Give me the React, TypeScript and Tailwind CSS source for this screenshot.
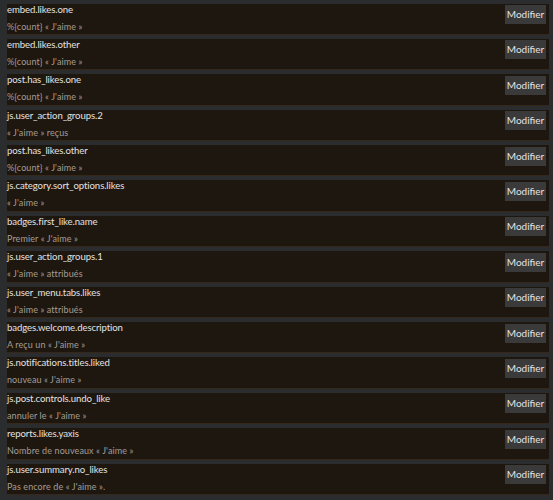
import React from "react";

const rows = [
  { key: "embed.likes.one", value: "%{count} « J'aime »" },
  { key: "embed.likes.other", value: "%{count} « J'aime »" },
  { key: "post.has_likes.one", value: "%{count} « J'aime »" },
  { key: "js.user_action_groups.2", value: "« J'aime » reçus" },
  { key: "post.has_likes.other", value: "%{count} « J'aime »" },
  { key: "js.category.sort_options.likes", value: "« J'aime »" },
  { key: "badges.first_like.name", value: "Premier « J'aime »" },
  { key: "js.user_action_groups.1", value: "« J'aime » attribués" },
  { key: "js.user_menu.tabs.likes", value: "« J'aime » attribués" },
  { key: "badges.welcome.description", value: "A reçu un « J'aime »" },
  { key: "js.notifications.titles.liked", value: "nouveau « J'aime »" },
  { key: "js.post.controls.undo_like", value: "annuler le « J'aime »" },
  { key: "reports.likes.yaxis", value: "Nombre de nouveaux « J'aime »" },
  { key: "js.user.summary.no_likes", value: "Pas encore de « J'aime »." },
];

const App = () => {
  return (
    <div
      className="w-full h-[500px] overflow-hidden bg-[#2b2c2d] pl-[7px] pr-[4px] pt-[3.5px] flex flex-col gap-[4px]"
      style={{ fontFamily: "Lato, 'Open Sans', sans-serif" }}
    >
      {rows.map((row) => (
        <div
          key={row.key}
          className="h-[31.4px] shrink-0 bg-[#1e170f] border-b border-[#35281b] flex justify-between items-start"
        >
          <div className="flex flex-col">
            <span className="text-[9.6px] leading-[12px] text-[#e4e2e0] tracking-[-0.1px]">
              {row.key}
            </span>
            <span className="text-[9px] leading-[12px] mt-[5px] text-[#a39d97] tracking-[0.1px]">
              {row.value}
            </span>
          </div>
          <button className="mt-[1.5px] mr-[3px] h-[19px] w-[41px] bg-[#3a3a3a] text-[#e2e2e2] text-[10px] flex items-center justify-center">
            Modifier
          </button>
        </div>
      ))}
    </div>
  );
};

export default App;
